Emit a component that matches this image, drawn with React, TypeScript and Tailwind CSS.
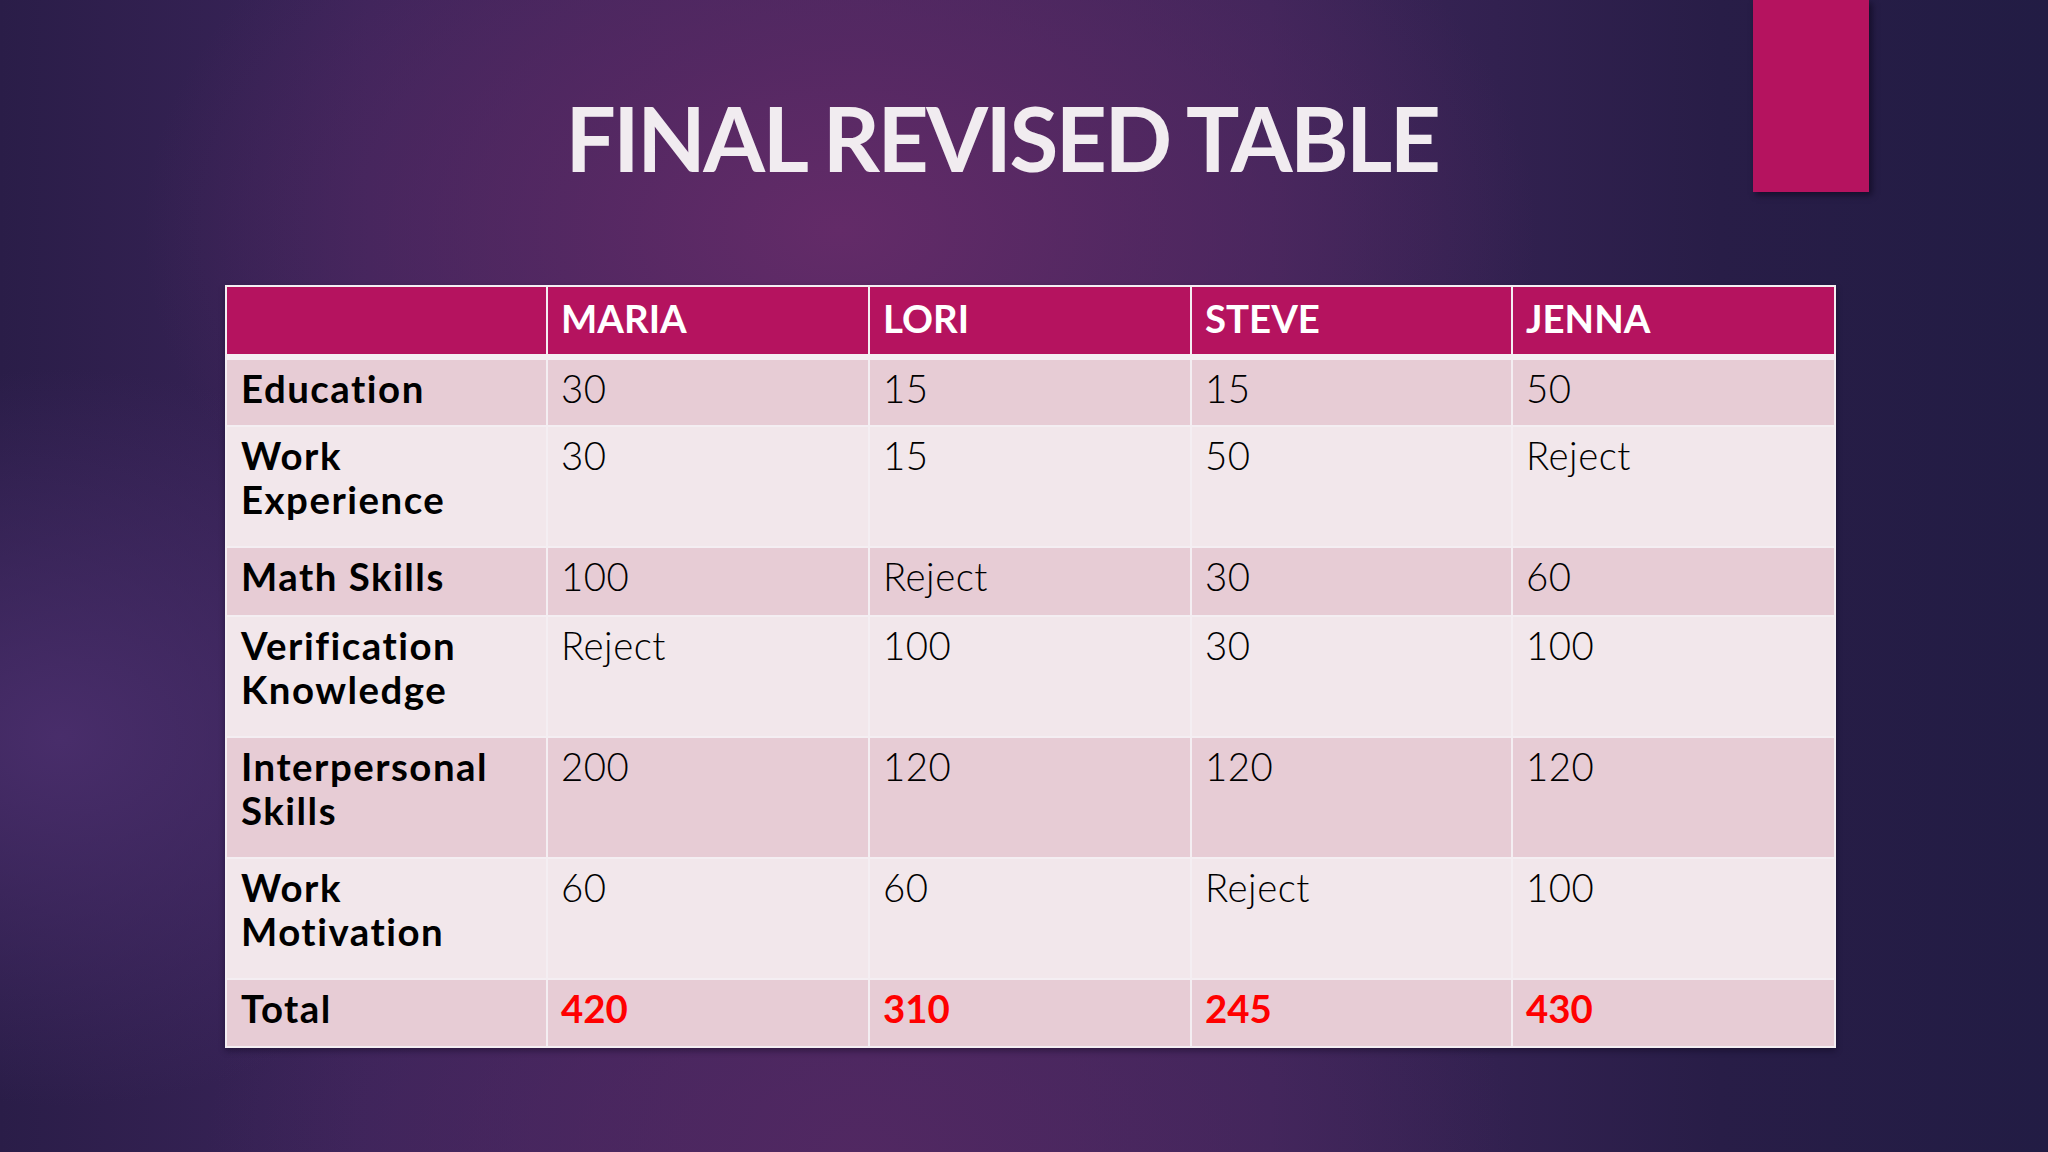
const COLUMNS = ["MARIA", "LORI", "STEVE", "JENNA"];

type Row = { label: string[]; values: string[]; tall?: boolean; total?: boolean };

const ROWS: Row[] = [
  { label: ["Education"], values: ["30", "15", "15", "50"] },
  { label: ["Work", "Experience"], values: ["30", "15", "50", "Reject"], tall: true },
  { label: ["Math Skills"], values: ["100", "Reject", "30", "60"] },
  { label: ["Verification", "Knowledge"], values: ["Reject", "100", "30", "100"], tall: true },
  { label: ["Interpersonal", "Skills"], values: ["200", "120", "120", "120"], tall: true },
  { label: ["Work", "Motivation"], values: ["60", "60", "Reject", "100"], tall: true },
  { label: ["Total"], values: ["420", "310", "245", "430"], total: true },
];

export default function App() {
  return (
    <div className="relative w-[2048px] h-[1152px] overflow-hidden bg-[#2a1d48] bg-[radial-gradient(ellipse_34%_40%_at_41%_20%,#632b68_0%,rgba(90,41,100,0.75)_40%,rgba(70,38,96,0)_100%),radial-gradient(ellipse_22%_32%_at_3%_64%,rgba(74,46,108,0.95)_0%,rgba(66,40,100,0)_100%),radial-gradient(ellipse_32%_35%_at_42%_100%,rgba(82,40,98,0.9)_0%,rgba(70,38,96,0)_100%),linear-gradient(to_right,#2a1d48_0%,#3b245a_18%,#45275f_42%,#3c2559_62%,#281d47_84%,#221c44_100%)] font-['Lato','Open_Sans',sans-serif]">
      {/* accent bar */}
      <div className="absolute left-[1753px] top-0 w-[116px] h-[192px] bg-[#b5135f] shadow-[3px_3px_6px_rgba(10,5,25,0.6)]" />

      <h1 className="pt-[93px] pr-[44px] text-center text-[89px] leading-[89px] font-bold text-[#f1ecf0] tracking-[-2.5px]">
        FINAL REVISED TABLE
      </h1>

      <table className="mt-[103px] ml-[225px] w-[1609px] table-fixed border-collapse text-[38.4px] leading-[44px] text-black shadow-[0_3px_6px_rgba(10,5,25,0.4)]">
        <colgroup>
          <col className="w-[321px]" />
          <col className="w-[322px]" />
          <col className="w-[322px]" />
          <col className="w-[321px]" />
          <col className="w-[323px]" />
        </colgroup>
        <thead>
          <tr className="bg-[#b5135f]">
            <th className="h-[71px] border-2 border-b-[6px] border-[#f4eef2]" />
            {COLUMNS.map((name) => (
              <th
                key={name}
                className="h-[71px] border-2 border-b-[6px] border-[#f4eef2] pl-[13px] pt-[9px] text-left align-top font-bold text-white"
              >
                {name}
              </th>
            ))}
          </tr>
        </thead>
        <tbody>
          {ROWS.map((row, i) => (
            <tr key={row.label.join(" ")} className={i % 2 === 0 ? "bg-[#e7ccd5]" : "bg-[#f2e7eb]"}>
              <td
                className={`${row.tall ? "h-[121px]" : row.total ? "h-[68px]" : "h-[69px]"} border-2 border-[#f4eef2] pl-[14px] pt-[6px] align-top font-bold tracking-[1.5px]`}
              >
                {row.label.map((line) => (
                  <div key={line}>{line}</div>
                ))}
              </td>
              {row.values.map((v, j) => (
                <td
                  key={j}
                  className={`border-2 border-[#f4eef2] pl-[13px] pt-[6px] align-top ${
                    row.total ? "font-bold text-[#ff0000]" : "font-light tracking-[0.5px]"
                  }`}
                >
                  {v}
                </td>
              ))}
            </tr>
          ))}
        </tbody>
      </table>
    </div>
  );
}
